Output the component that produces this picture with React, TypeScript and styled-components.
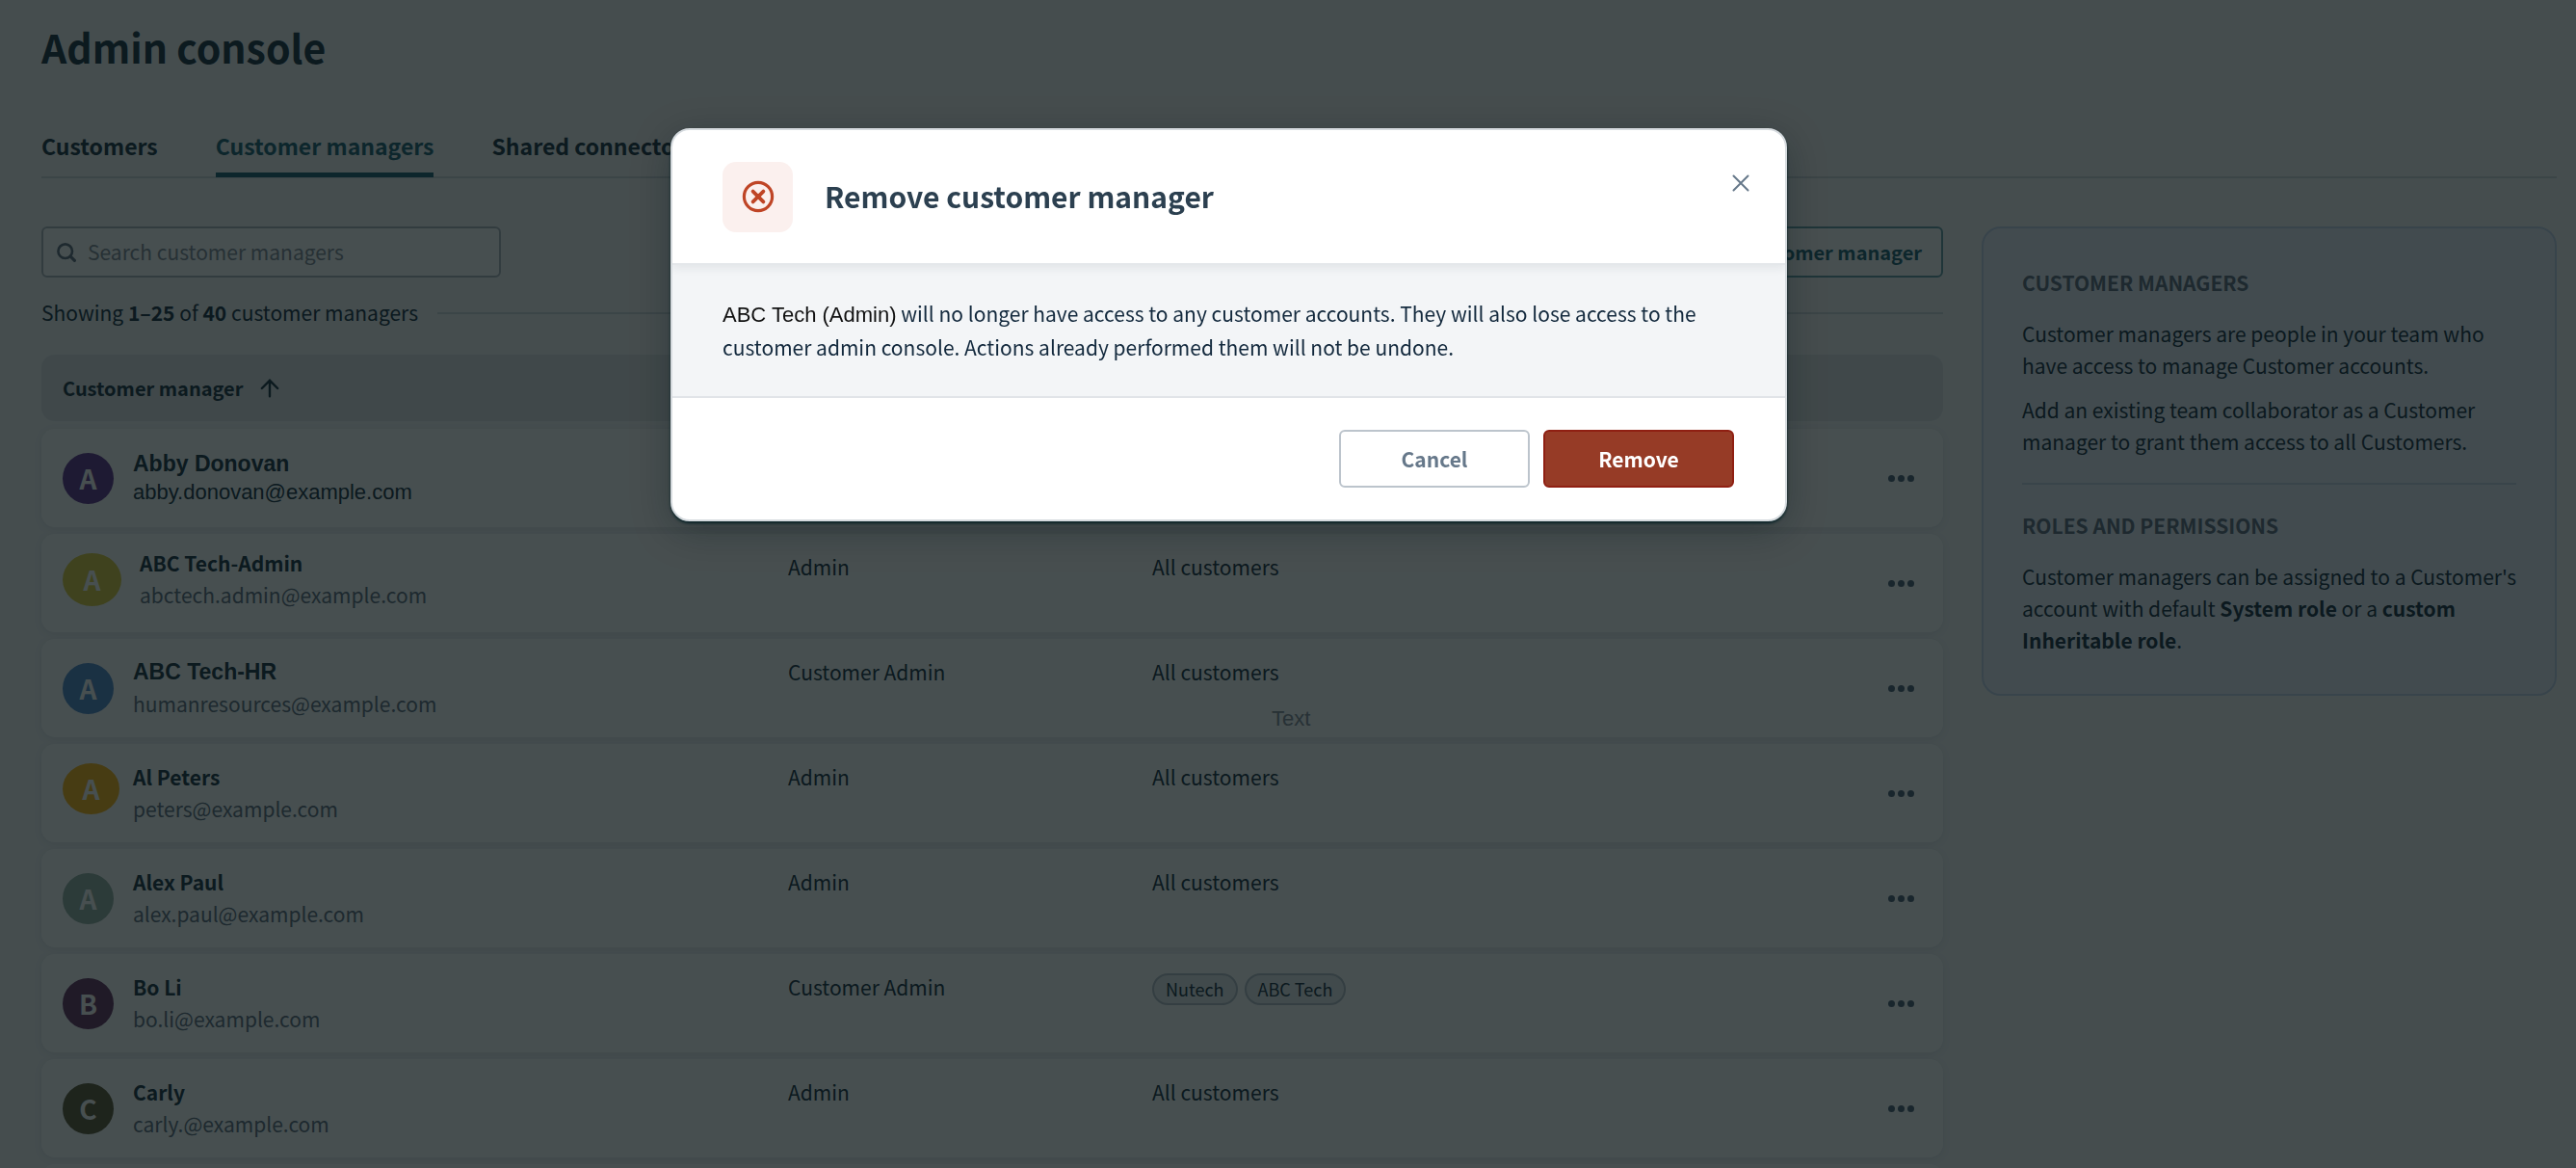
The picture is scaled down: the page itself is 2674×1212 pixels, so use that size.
import React from "react";
import styled, { createGlobalStyle, css } from "styled-components";

const sans = `"Noto Sans CJK SC", "Noto Sans", sans-serif`;
const arial = `"Liberation Sans", Arial, sans-serif`;

const color = {
  page: "#f6f6f8",
  card: "#ffffff",
  ink: "#2c4050",
  text: "#2b3f50",
  muted: "#6c7888",
  line: "#d3d9df",
  teal: "#2f6e7e",
  danger: "#963b26",
};

const GlobalStyle = createGlobalStyle`
  *, *::before, *::after { box-sizing: border-box; }
  body {
    margin: 0;
    background: ${color.page};
    color: ${color.text};
    font: 400 21px/33px ${sans};
  }
  button, input { font: inherit; color: inherit; }
  h1, h2, h3, p { margin: 0; }
`;

const Page = styled.div`
  height: 100vh;
  overflow: hidden;
  padding: 18px 20px 0 43px;
`;

const PageTitle = styled.h1`
  color: ${color.ink};
  font-size: 41px;
  line-height: 60px;
  font-weight: 700;
`;

const Tabs = styled.nav`
  display: flex;
  gap: 60px;
  margin-top: 50px;
  height: 57px;
  border-bottom: 2px solid ${color.line};
`;

const Tab = styled.a<{ $active?: boolean }>`
  display: flex;
  align-items: flex-start;
  padding-top: 7px;
  height: 56px;
  font-size: 23px;
  font-weight: 700;
  text-decoration: none;
  white-space: nowrap;
  color: ${(p) => (p.$active ? color.teal : color.ink)};
  ${(p) =>
    p.$active &&
    css`
      background: linear-gradient(${color.teal}, ${color.teal}) bottom / 100% 5px no-repeat;
    `}
`;

const Columns = styled.div`
  display: flex;
  align-items: flex-start;
  gap: 40px;
  margin-top: 50px;
`;

const Main = styled.main`
  flex: 1;
  min-width: 0;
`;

const Toolbar = styled.div`
  display: flex;
  justify-content: space-between;
`;

const SearchBox = styled.label`
  display: flex;
  align-items: center;
  gap: 12px;
  width: 477px;
  height: 53px;
  padding: 0 14px;
  border: 2px solid #b5bac2;
  border-radius: 6px;
  background: ${color.card};
  color: ${color.muted};
`;

const SearchInput = styled.input`
  flex: 1;
  min-width: 0;
  padding: 0;
  border: 0;
  outline: 0;
  background: transparent;
  &::placeholder {
    color: #8b929e;
    opacity: 1;
  }
`;

const AddButton = styled.button`
  height: 53px;
  padding: 0 20px;
  border: 2px solid #6fa3ad;
  border-radius: 6px;
  background: ${color.card};
  color: ${color.teal};
  font-size: 20px;
  font-weight: 700;
`;

const Summary = styled.div`
  display: flex;
  align-items: center;
  gap: 20px;
  margin: 20px 0 27px;
  &::after {
    content: "";
    flex: 1;
    height: 2px;
    background: ${color.line};
  }
`;

const Table = styled.table`
  display: block;
`;

const Head = styled.thead`
  display: block;
`;

const Body = styled.tbody`
  display: flex;
  flex-direction: column;
  gap: 7px;
  margin-top: 8px;
  &::after {
    content: "";
    height: 102px;
    border-radius: 14px;
    background: ${color.card};
  }
`;

const rowGrid = css`
  display: grid;
  grid-template-columns: 775fr 378fr 764fr 57px;
  border-radius: 14px;
`;

const HeadRow = styled.tr`
  ${rowGrid}
  height: 69px;
  align-items: center;
  background: #e5e7e9;
`;

const HeadCell = styled.th`
  display: flex;
  align-items: center;
  gap: 18px;
  padding: 0 0 0 22px;
  color: ${color.ink};
  font-size: 20px;
  font-weight: 700;
  text-align: left;
  &:not(:first-child) {
    padding-left: 0;
  }
`;

const Row = styled.tr`
  ${rowGrid}
  height: 102px;
  background: ${color.card};
  box-shadow: 0 2px 8px rgba(30, 45, 60, 0.08);
`;

const Cell = styled.td`
  position: relative;
  padding: 18px 0 0;
`;

const PersonCell = styled.td<{ $raised?: boolean }>`
  display: flex;
  align-items: center;
  padding: 0 0 ${(p) => (p.$raised ? 8 : 0)}px 22px;
`;

const AvatarSlot = styled.div<{ $wide?: boolean; $raised?: boolean }>`
  flex: 0 0 ${(p) => (p.$wide ? 80 : 73)}px;
  padding-bottom: ${(p) => (p.$raised ? 10 : 0)}px;
`;

const Avatar = styled.div<{ $bg: string; $width?: number }>`
  display: flex;
  align-items: center;
  justify-content: center;
  width: ${(p) => p.$width ?? 53}px;
  height: ${(p) => (p.$width === 61 ? 55 : 53)}px;
  border-radius: 50%;
  background: ${(p) => p.$bg};
  color: #ffffff;
  font-size: 28px;
  font-weight: 700;
`;

const Name = styled.div<{ $arial?: boolean }>`
  color: ${color.ink};
  font-weight: 700;
  ${(p) => p.$arial && `font-family: ${arial}; font-size: 23px;`}
`;

const Email = styled.div<{ $arial?: boolean }>`
  color: ${color.muted};
  ${(p) => p.$arial && `font-family: ${arial}; font-size: 22px; color: ${color.text};`}
`;

const PersonText = styled.div<{ $tight?: boolean }>`
  ${(p) => p.$tight && "line-height: 29px;"}
`;

const FloatingNote = styled.span`
  position: absolute;
  left: 124px;
  bottom: 4px;
  color: #8b929e;
  font: 22px/30px ${arial};
`;

const Tags = styled.div`
  display: flex;
  gap: 7px;
  padding-top: 2px;
`;

const Tag = styled.span`
  padding: 0 12px;
  border: 2px solid #b9c2cb;
  border-radius: 17px;
  background: #eaecef;
  font-size: 18px;
  line-height: 29px;
`;

const MenuCell = styled.td`
  display: flex;
  align-items: center;
  padding: 0;
`;

const MenuButton = styled.button`
  display: flex;
  gap: 3px;
  padding: 10px 0;
  border: 0;
  background: none;
  i {
    width: 7px;
    height: 7px;
    border-radius: 50%;
    background: #5b6c80;
  }
`;

const Aside = styled.aside`
  flex: 0 0 597px;
  padding: 40px 32px 26px 40px;
  border: 2px solid #c9d6ee;
  border-radius: 20px;
  background: #eef1fc;
  p {
    margin-bottom: 13px;
  }
`;

const AsideTitle = styled.h3`
  margin-bottom: 20px;
  color: ${color.muted};
  font-size: 21px;
  line-height: 33px;
  font-weight: 700;
  text-transform: uppercase;
`;

const Divider = styled.hr`
  height: 2px;
  margin: 26px 8px 26px 0;
  border: 0;
  background: #cdd8ea;
`;

const Backdrop = styled.div`
  position: fixed;
  inset: 0;
  display: flex;
  align-items: flex-start;
  justify-content: center;
  padding: 133px 123px 0 0;
  background: rgba(0, 11, 13, 0.72);
`;

const Dialog = styled.section`
  width: 1159px;
  border: 2px solid #d5dade;
  border-radius: 20px;
  overflow: hidden;
  background: #ffffff;
  box-shadow: 0 10px 40px rgba(0, 15, 20, 0.3), 0 2px 3px #0b272c;
`;

const DialogHeader = styled.header`
  position: relative;
  display: flex;
  align-items: center;
  gap: 33px;
  height: 140px;
  padding: 0 34px 0 52px;
  border-bottom: 2px solid #e4e7ea;
  box-shadow: 0 4px 8px rgba(30, 45, 60, 0.07);
`;

const IconTile = styled.div`
  display: flex;
  align-items: center;
  justify-content: center;
  width: 73px;
  height: 73px;
  border-radius: 14px;
  background: #fbf0ee;
`;

const DialogTitle = styled.h2`
  flex: 1;
  padding-bottom: 2px;
  color: #2c4050;
  font-size: 30px;
  line-height: 42px;
  font-weight: 700;
`;

const CloseButton = styled.button`
  display: flex;
  align-self: flex-start;
  margin-top: 43px;
  padding: 3px;
  border: 0;
  background: none;
  color: #66788a;
`;

const DialogBody = styled.div`
  padding: 33px 52px;
  border-bottom: 2px solid #e1e4e8;
  background: #f3f5f7;
  color: #13293d;
  line-height: 35px;
`;

const Subject = styled.span`
  color: #111111;
  font-family: ${arial};
  font-size: 22px;
  line-height: 22px;
`;

const DialogFooter = styled.footer`
  display: flex;
  justify-content: flex-end;
  gap: 14px;
  padding: 33px 53px;
`;

const ActionButton = styled.button<{ $danger?: boolean }>`
  width: 198px;
  height: 60px;
  padding: 0;
  border: 2px solid ${(p) => (p.$danger ? "#8f1f12" : "#bcc4cc")};
  border-radius: 6px;
  background: ${(p) => (p.$danger ? color.danger : "#ffffff")};
  color: ${(p) => (p.$danger ? "#ffffff" : "#66788a")};
  font-weight: 700;
`;

type Person = {
  name: string;
  email: string;
  role: string;
  bg: string;
  tags?: string[];
  note?: string;
  avatarWidth?: number;
  raised?: boolean;
  raisedAvatar?: boolean;
  arialName?: boolean;
  arialEmail?: boolean;
};

const people: Person[] = [
  { name: "Abby Donovan", email: "abby.donovan@example.com", role: "Admin", bg: "#6e4096", arialName: true, arialEmail: true },
  { name: "ABC Tech-Admin", email: "abctech.admin@example.com", role: "Admin", bg: "#e0d04b", avatarWidth: 61, raised: true },
  { name: "ABC Tech-HR", email: "humanresources@example.com", role: "Customer Admin", bg: "#5d92d0", note: "Text", arialName: true },
  { name: "Al Peters", email: "peters@example.com", role: "Admin", bg: "#ffb927", avatarWidth: 59, raisedAvatar: true },
  { name: "Alex Paul", email: "alex.paul@example.com", role: "Admin", bg: "#9db6ab" },
  { name: "Bo Li", email: "bo.li@example.com", role: "Customer Admin", bg: "#72406e", tags: ["Nutech", "ABC Tech"] },
  { name: "Carly", email: "carly.@example.com", role: "Admin", bg: "#6b6447" },
];

const SearchIcon = () => (
  <svg width="20" height="20" viewBox="0 0 20 20" fill="none" stroke="currentColor" strokeLinecap="round">
    <circle cx="8.7" cy="8.7" r="7.3" strokeWidth="2.6" />
    <path d="M14.2 14.2l4.2 4.2" strokeWidth="3.2" />
  </svg>
);

const ArrowUpIcon = () => (
  <svg width="20" height="20" viewBox="0 0 20 20" fill="none" stroke="currentColor" strokeWidth="2.4" strokeLinecap="round">
    <path d="M10 18.2V2.4M1.8 10L10 1.8l8.2 8.2" />
  </svg>
);

const RemoveIcon = () => (
  <svg width="34" height="34" viewBox="0 0 34 34" fill="none" stroke="#bf4526" strokeLinecap="round">
    <circle cx="17" cy="17" r="14.6" strokeWidth="3.2" />
    <path d="M11.6 11.6l10.8 10.8M22.4 11.6L11.6 22.4" strokeWidth="3.8" />
  </svg>
);

const CloseIcon = () => (
  <svg width="18" height="18" viewBox="0 0 18 18" fill="none" stroke="currentColor" strokeWidth="2" strokeLinecap="round">
    <path d="M1.5 1.5l15 15M16.5 1.5l-15 15" />
  </svg>
);

function PersonRow({ person }: { person: Person }) {
  return (
    <Row>
      <PersonCell $raised={person.raised}>
        <AvatarSlot $wide={person.avatarWidth === 61} $raised={person.raisedAvatar}>
          <Avatar $bg={person.bg} $width={person.avatarWidth}>
            {person.name[0]}
          </Avatar>
        </AvatarSlot>
        <PersonText $tight={person.arialEmail}>
          <Name $arial={person.arialName}>{person.name}</Name>
          <Email $arial={person.arialEmail}>{person.email}</Email>
        </PersonText>
      </PersonCell>
      <Cell>{person.role}</Cell>
      <Cell>
        {person.tags ? (
          <Tags>
            {person.tags.map((tag) => (
              <Tag key={tag}>{tag}</Tag>
            ))}
          </Tags>
        ) : (
          "All customers"
        )}
        {person.note && <FloatingNote>{person.note}</FloatingNote>}
      </Cell>
      <MenuCell>
        <MenuButton type="button" aria-label={`Actions for ${person.name}`}>
          <i />
          <i />
          <i />
        </MenuButton>
      </MenuCell>
    </Row>
  );
}

export default function App() {
  return (
    <>
      <GlobalStyle />
      <Page>
        <PageTitle>Admin console</PageTitle>
        <Tabs>
          <Tab href="#customers">Customers</Tab>
          <Tab href="#managers" $active>
            Customer managers
          </Tab>
          <Tab href="#connectors">Shared connectors</Tab>
        </Tabs>
        <Columns>
          <Main>
            <Toolbar>
              <SearchBox>
                <SearchIcon />
                <SearchInput type="search" placeholder="Search customer managers" aria-label="Search customer managers" />
              </SearchBox>
              <AddButton type="button">Add customer manager</AddButton>
            </Toolbar>
            <Summary>
              <span>
                Showing <b>1–25</b> of <b>40</b> customer managers
              </span>
            </Summary>
            <Table>
              <Head>
                <HeadRow>
                  <HeadCell>
                    Customer manager
                    <ArrowUpIcon />
                  </HeadCell>
                  <HeadCell>Role</HeadCell>
                  <HeadCell>Customers</HeadCell>
                </HeadRow>
              </Head>
              <Body>
                {people.map((person) => (
                  <PersonRow key={person.name} person={person} />
                ))}
              </Body>
            </Table>
          </Main>
          <Aside>
            <AsideTitle>Customer managers</AsideTitle>
            <p>Customer managers are people in your team who have access to manage Customer accounts.</p>
            <p>Add an existing team collaborator as a Customer manager to grant them access to all Customers.</p>
            <Divider />
            <AsideTitle>Roles and permissions</AsideTitle>
            <p>
              Customer managers can be assigned to a Customer's account with default <b>System role</b> or a{" "}
              <b>custom Inheritable role</b>.
            </p>
          </Aside>
        </Columns>
      </Page>
      <Backdrop>
        <Dialog role="dialog" aria-modal="true" aria-labelledby="dialog-title">
          <DialogHeader>
            <IconTile>
              <RemoveIcon />
            </IconTile>
            <DialogTitle id="dialog-title">Remove customer manager</DialogTitle>
            <CloseButton type="button" aria-label="Close">
              <CloseIcon />
            </CloseButton>
          </DialogHeader>
          <DialogBody>
            <p>
              <Subject>ABC Tech (Admin)</Subject> will no longer have access to any customer accounts. They will also
              lose access to the customer admin console. Actions already performed them will not be undone.
            </p>
          </DialogBody>
          <DialogFooter>
            <ActionButton type="button">Cancel</ActionButton>
            <ActionButton type="button" $danger>
              Remove
            </ActionButton>
          </DialogFooter>
        </Dialog>
      </Backdrop>
    </>
  );
}
